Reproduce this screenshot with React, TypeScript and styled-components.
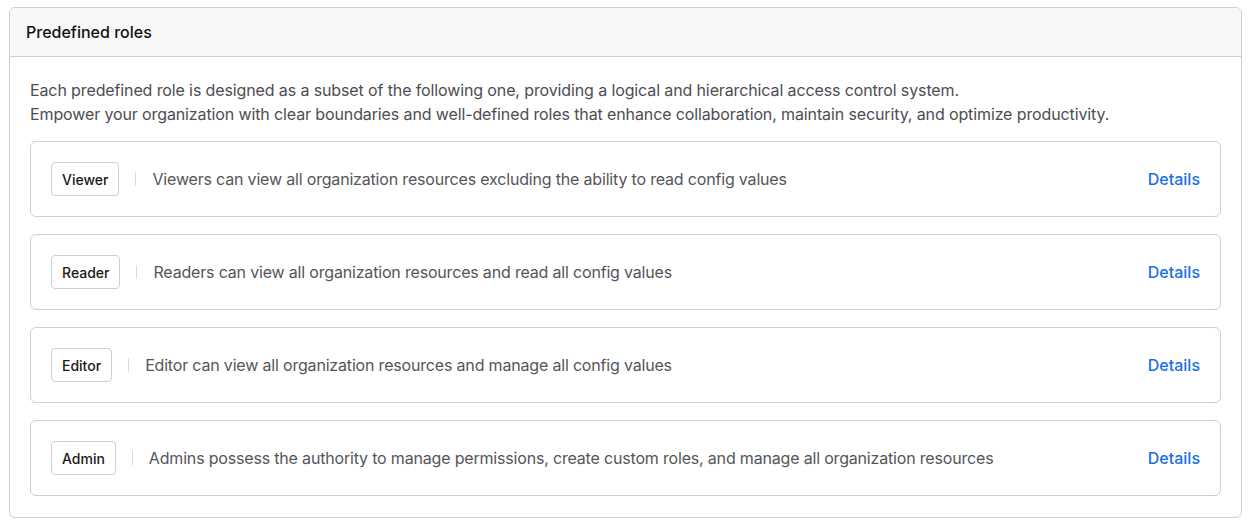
import React from 'react'
import styled, { createGlobalStyle } from 'styled-components'

const roles = [
  { name: 'Viewer', text: 'Viewers can view all organization resources excluding the ability to read config values' },
  { name: 'Reader', text: 'Readers can view all organization resources and read all config values' },
  { name: 'Editor', text: 'Editor can view all organization resources and manage all config values' },
  { name: 'Admin', text: 'Admins possess the authority to manage permissions, create custom roles, and manage all organization resources' },
]

const App = () => {
  return (
    <>
      <GlobalStyle />
      <Card>
        <Header>Predefined roles</Header>
        <Body>
          <Intro>
            Each predefined role is designed as a subset of the following one, providing a logical and hierarchical access control system.
            <br />
            Empower your organization with clear boundaries and well-defined roles that enhance collaboration, maintain security, and optimize productivity.
          </Intro>
          <List>
            {roles.map(r => (
              <Row key={r.name}>
                <Badge>{r.name}</Badge>
                <Divider />
                <Description>{r.text}</Description>
                <DetailsLink href="#">Details</DetailsLink>
              </Row>
            ))}
          </List>
        </Body>
      </Card>
    </>
  )
}

const GlobalStyle = createGlobalStyle`
  body {
    margin: 0;
    padding: 7px 7px 0 9px;
    background: #fff;
    font-family: Inter, "Noto Sans", sans-serif;
  }
`

const Card = styled.div`
  border: 1px solid #cfcfd3;
  border-radius: 6px;
  overflow: hidden;
  background: #fff;
`

const Header = styled.div`
  height: 48px;
  display: flex;
  align-items: center;
  padding: 0 16px;
  background: #f7f7f8;
  border-bottom: 1px solid #cfcfd3;
  font-size: 16px;
  font-weight: 500;
  color: #111;
`

const Body = styled.div`
  padding: 21px 20px 21px 20px;
`

const Intro = styled.p`
  margin: 0 0 15px;
  font-size: 16px;
  line-height: 24px;
  color: #4d4d52;
  letter-spacing: -0.12px;
`

const List = styled.div`
  display: flex;
  flex-direction: column;
  gap: 17px;
`

const Row = styled.div`
  height: 76px;
  box-sizing: border-box;
  display: flex;
  align-items: center;
  padding: 0 20px;
  border: 1px solid #cfcfd3;
  border-radius: 6px;
`

const Badge = styled.span`
  height: 34px;
  box-sizing: border-box;
  display: inline-flex;
  align-items: center;
  padding: 0 10px;
  border: 1px solid #cfcfd3;
  border-radius: 4px;
  font-size: 14px;
  font-weight: 500;
  color: #1a1a1a;
`

const Divider = styled.span`
  width: 1px;
  height: 14px;
  background: #d9d9dc;
  margin: 0 16px;
`

const Description = styled.span`
  flex: 1;
  font-size: 16px;
  color: #55555a;
  letter-spacing: -0.18px;
`

const DetailsLink = styled.a`
  font-size: 16px;
  font-weight: 500;
  color: #1a6ee6;
  text-decoration: none;
`

export default App
